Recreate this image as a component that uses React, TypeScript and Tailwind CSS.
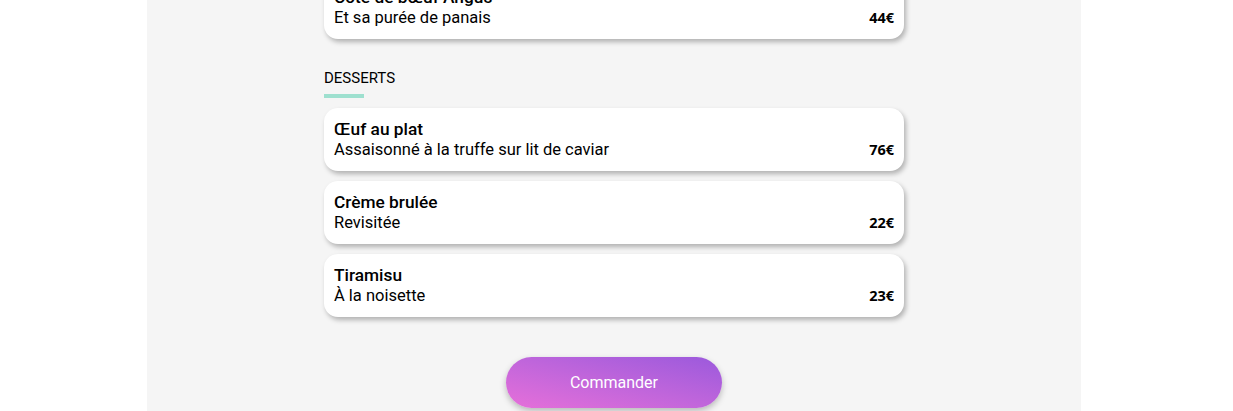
import React from 'react';

type Dish = { name: string; desc: string; price: string };

const desserts: Dish[] = [
  { name: 'Œuf au plat', desc: 'Assaisonné à la truffe sur lit de caviar', price: '76€' },
  { name: 'Crème brulée', desc: 'Revisitée', price: '22€' },
  { name: 'Tiramisu', desc: 'À la noisette', price: '23€' },
];

function DishCard({ dish }: { dish: Dish }) {
  return (
    <div className="bg-white rounded-[14px] pt-[11px] pb-[11px] px-[10px] shadow-[2px_3px_5px_rgba(0,0,0,0.28)]">
      <h3 className="text-[17.3px] leading-[21px] font-medium text-black">{dish.name}</h3>
      <div className="flex justify-between items-center">
        <p className="text-[16.5px] leading-[20px] text-black">{dish.desc}</p>
        <span className="text-[14.5px] leading-[20px] font-bold text-black font-['Open_Sans',sans-serif]">{dish.price}</span>
      </div>
    </div>
  );
}

export default function App() {
  return (
    <div className="h-[411px] overflow-hidden bg-white font-['Roboto',sans-serif]">
      <div className="ml-[147px] w-[934px] h-full bg-[#f5f5f5] flex flex-col">
        <div className="w-[580px] mx-auto -mt-[24px]">
          <DishCard dish={{ name: 'Côte de bœuf Angus', desc: 'Et sa purée de panais', price: '44€' }} />

          <div className="mt-[30px]">
            <h2 className="text-[15px] leading-[19px] uppercase text-black">Desserts</h2>
            <div className="mt-[6px] w-[40px] h-[4px] bg-[#9ee0cf]"></div>
          </div>

          <div className="mt-[10px] flex flex-col gap-[10px]">
            {desserts.map((d) => (
              <DishCard key={d.name} dish={d} />
            ))}
          </div>
        </div>

        <div className="flex justify-center mt-[40px]">
          <button className="w-[216px] h-[51px] rounded-full text-white text-[16px] bg-gradient-to-tr from-[#e66fd9] to-[#9b59dc] shadow-[0_3px_6px_rgba(0,0,0,0.25)]">
            Commander
          </button>
        </div>
      </div>
    </div>
  );
}
